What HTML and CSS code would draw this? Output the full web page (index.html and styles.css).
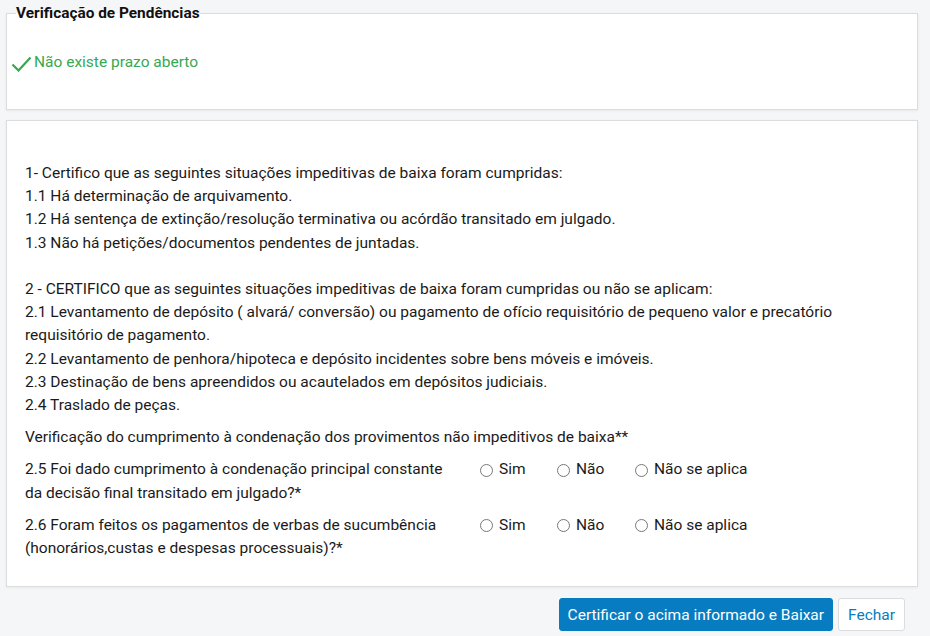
FILE: index.html
```html
<!DOCTYPE html>
<html lang="pt">
<head>
<meta charset="utf-8">
<link rel="stylesheet" href="styles.css">
</head>
<body>
<div class="page">
  <fieldset class="panel pend">
    <legend class="legend">Verificação de Pendências</legend>
    <div class="ok">
      <svg class="check" width="21" height="16" viewBox="0 0 21 16"><path d="M1.5 8.5 L7.5 14.5 L19.5 1.5" fill="none" stroke="#36a852" stroke-width="2.2"/></svg>
      <span>Não existe prazo aberto</span>
    </div>
  </fieldset>

  <div class="panel cert">
    <div class="block">
      <div>1- Certifico que as seguintes situações impeditivas de baixa foram cumpridas:</div>
      <div>1.1 Há determinação de arquivamento.</div>
      <div>1.2 Há sentença de extinção/resolução terminativa ou acórdão transitado em julgado.</div>
      <div>1.3 Não há petições/documentos pendentes de juntadas.</div>
      <div>&nbsp;</div>
      <div>2 - CERTIFICO que as seguintes situações impeditivas de baixa foram cumpridas ou não se aplicam:</div>
      <div>2.1 Levantamento de depósito ( alvará/ conversão) ou pagamento de ofício requisitório de pequeno valor e precatório requisitório de pagamento.</div>
      <div>2.2 Levantamento de penhora/hipoteca e depósito incidentes sobre bens móveis e imóveis.</div>
      <div>2.3 Destinação de bens apreendidos ou acautelados em depósitos judiciais.</div>
      <div>2.4 Traslado de peças.</div>
    </div>
    <p class="para">Verificação do cumprimento à condenação dos provimentos não impeditivos de baixa**</p>
    <div class="q">
      <div class="qtext">2.5 Foi dado cumprimento à condenação principal constante da decisão final transitado em julgado?*</div>
      <div class="opts">
        <label class="opt o1"><span class="radio"></span>Sim</label>
        <label class="opt o2"><span class="radio"></span>Não</label>
        <label class="opt"><span class="radio"></span>Não se aplica</label>
      </div>
    </div>
    <div class="q">
      <div class="qtext">2.6 Foram feitos os pagamentos de verbas de sucumbência (honorários,custas e despesas processuais)?*</div>
      <div class="opts">
        <label class="opt o1"><span class="radio"></span>Sim</label>
        <label class="opt o2"><span class="radio"></span>Não</label>
        <label class="opt"><span class="radio"></span>Não se aplica</label>
      </div>
    </div>
  </div>

  <div class="actions">
    <button class="btn primary">Certificar o acima informado e Baixar</button>
    <button class="btn light">Fechar</button>
  </div>
</div>
</body>
</html>
```
FILE: styles.css
```css
html, body {
  margin: 0;
  padding: 0;
  background: #f5f6f8;
}
body {
  font-family: Roboto, "Liberation Sans", Arial, sans-serif;
  font-size: 15.5px;
  color: #1a1a1a;
}
.page {
  padding: 5px 12px 0 6px;
  display: flex;
  flex-direction: column;
}
.panel {
  background: #fff;
  border: 1px solid #dcdcdc;
  box-shadow: 0 1px 3px rgba(0,0,0,0.06);
  box-sizing: border-box;
}
.pend {
  margin: 0;
  padding: 0 4px;
  height: 105px;
  min-width: 0;
}
.legend {
  font-weight: bold;
  font-size: 15.4px;
  color: #111;
  padding: 0;
  margin-left: 5px;
  line-height: 16px;
}
.ok {
  display: flex;
  align-items: center;
  margin-top: 31px;
  color: #36a852;
  font-size: 15.5px;
  line-height: 20px;
}
.check {
  margin-right: 2px;
  margin-left: 0;
  margin-top: 3px;
}
.cert {
  margin-top: 10px;
  padding: 41px 18px 26px 18px;
  line-height: 23.2px;
}
.para {
  margin: 9px 0 8px 0;
}
.q {
  display: flex;
  margin-top: 9px;
}
.qtext {
  width: 436px;
  flex: none;
}
.opts {
  display: flex;
  align-items: flex-start;
  margin-left: 19px;
}
.opt {
  display: flex;
  align-items: center;
  height: 23.2px;
}
.o1 { width: 77px; }
.o2 { width: 78px; }
.radio {
  border: 1px solid #777;
  border-radius: 50%;
  margin-right: 6px;
  box-sizing: border-box;
  background: #fff;
  flex: none;
  width: 13px;
  height: 13px;
}
.actions {
  display: flex;
  justify-content: flex-end;
  gap: 5px;
  margin-top: 11px;
  padding-right: 13px;
}
.btn {
  font-family: Roboto, "Liberation Sans", Arial, sans-serif;
  font-size: 15.5px;
  height: 33px;
  border-radius: 3px;
  padding: 0 8px;
  cursor: pointer;
}
.primary {
  background: #087cc1;
  color: #fff;
  border: 1px solid #087cc1;
}
.light {
  background: #fff;
  color: #087cc1;
  border: 1px solid #dcdcdc;
  padding: 0 9px;
}
```
